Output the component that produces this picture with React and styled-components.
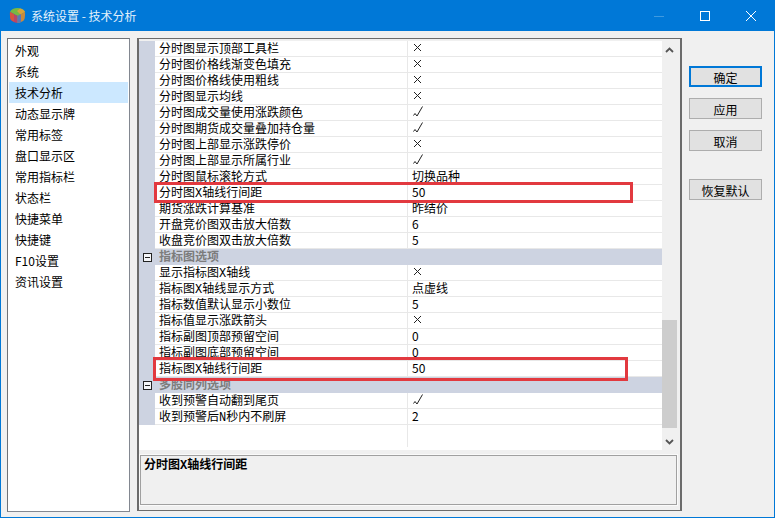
import React from "react";
import styled, { createGlobalStyle } from "styled-components";

const Global = createGlobalStyle`
  html, body { margin: 0; padding: 0; background: #f0f0f0; }
  body { font-family: "Noto Sans CJK SC", "Liberation Sans", sans-serif; font-size: 12px; color: #000; }
  * { box-sizing: border-box; }
`;

const Window = styled.div`
  width: 775px; height: 518px; display: flex; flex-direction: column;
  border: 1px solid #0078d7; border-top: 0; background: #f0f0f0; overflow: hidden;
`;
const TitleBar = styled.div`
  height: 31px; flex: none; background: #0078d7; color: #e4f1fb;
  display: flex; align-items: center; padding-left: 8px;
`;
const TitleText = styled.span`
  margin-left: 5px; line-height: 16px; white-space: pre;
`;
const WindowControls = styled.div`
  margin-left: auto; display: flex; align-items: center; height: 31px;
`;
const WindowControl = styled.div`
  width: 46px; height: 31px; display: flex; align-items: center; justify-content: center;
`;
const Body = styled.div`
  flex: 1; display: flex; padding: 7px 0 6px 6px; min-height: 0;
`;
const Sidebar = styled.ul`
  width: 123px; flex: none; margin: 0 7px 0 0; padding: 1px 1px; list-style: none;
  background: #fff; border: 1px solid #828790; border-top-color: #6f7277; border-left-color: #6f7277;
  height: 474px;
`;
const SideItem = styled.li`
  height: 21px; line-height: 21px; padding-left: 6px;
  background: ${p => (p.$selected ? "#cce8ff" : "transparent")};
`;
const Panel = styled.div`
  width: 545px; flex: none; height: 473px; position: relative;
  border: 1px solid #6b6b6b; border-left-width: 2px; padding: 2px 4px 5px 0; border-right-width: 2px;
  display: flex; flex-direction: column;
`;
const GridArea = styled.div`
  display: flex; height: 409px; flex: none;
`;
const Grid = styled.div`
  width: 523px; flex: none; background: #fff; position: relative; overflow: hidden;
  display: flex; flex-direction: column;
`;
const Row = styled.div`
  height: 16px; flex: none; display: grid; grid-template-columns: 16px 253px 1fr;
  background: ${p => (p.$header ? "#cdd3e1" : "#fff")};
`;
const Gutter = styled.div`
  background: #cdd3e1; display: flex; align-items: center; justify-content: center;
`;
const Label = styled.div`
  padding: 1px 0 0 4px; line-height: 16px; white-space: nowrap; overflow: hidden;
  font-family: "Liberation Mono", "Noto Sans CJK SC", monospace;
  border-right: 1px solid #e8e8e8; border-bottom: 1px solid #e8e8e8;
  ${p => p.$header && `font-weight: 700; color: #7c7c7c; border-color: #cdd3e1;`}
`;
const Value = styled.div`
  padding: 0 0 2px 4px; line-height: 13px; display: flex; align-items: center;
  border-bottom: 1px solid #e8e8e8;
  ${p => p.$header && `border-color: #cdd3e1;`}
  svg { margin-left: 1px; flex: none; }
`;
const EmptyRow = styled.div`
  flex: 1; display: grid; grid-template-columns: 16px 253px 1fr;
`;
const EmptyCell = styled.div`
  border-right: 1px solid #e8e8e8; margin-left: 16px; grid-column: 1 / 3; margin-bottom: 3px;
`;
const Expander = styled.span`
  width: 9px; height: 9px; border: 1px solid #222; background: #f4f5f8; display: flex;
  align-items: center; justify-content: center;
  &::after { content: ""; width: 5px; height: 1px; background: #222; }
`;
const Highlight = styled.div`
  position: absolute; border: 3px solid #e2393f; pointer-events: none;
  left: ${p => p.$left}px; top: ${p => p.$top}px; width: ${p => p.$width}px; height: ${p => p.$height}px;
`;
const ScrollBar = styled.div`
  width: 15px; flex: none; display: flex; flex-direction: column; background: #f0f0f0;
`;
const ScrollButton = styled.div`
  height: 17px; flex: none; display: flex; align-items: center; justify-content: center;
`;
const ScrollTrack = styled.div`
  flex: 1; display: flex; flex-direction: column; justify-content: flex-end; padding-bottom: 5px;
`;
const ScrollThumb = styled.div`
  height: 108px; background: #cdcdcd;
`;
const Description = styled.div`
  margin: 5px 0 0 1px; height: 50px; border: 1px solid #a0a0a0; background: #f0f0f0;
  box-shadow: 0 0 0 1px #fafafa; width: 537px; padding: 2px 3px; font-weight: 700; line-height: 16px; flex: none;
  font-family: "Liberation Mono", "Noto Sans CJK SC", monospace;
`;
const Actions = styled.div`
  margin-left: 7px; width: 73px; flex: none; display: flex; flex-direction: column; padding-top: 28px;
`;
const Button = styled.button`
  width: 73px; height: 21px; padding: 2px 0 0; font: inherit; line-height: 15px; color: #000;
  background: #e1e1e1; border: ${p => (p.$primary ? "2px solid #0078d7" : "1px solid #adadad")};
  margin-bottom: ${p => p.$gap || 11}px;
`;

const Cross = () => (
  <svg width="9" height="9" viewBox="0 0 9 9" fill="none" stroke="#222" strokeWidth="1">
    <path d="M1 1 L8 8 M8 1 L1 8" />
  </svg>
);
const Check = () => (
  <svg width="10" height="11" viewBox="0 0 10 11" fill="none" stroke="#222" strokeWidth="1">
    <path d="M0.5 9.5 L2 7.5 L4 10 L9.5 0.5" />
  </svg>
);

const rows = [
  ["分时图显示顶部工具栏", "x"], ["分时图价格线渐变色填充", "x"], ["分时图价格线使用粗线", "x"],
  ["分时图显示均线", "x"], ["分时图成交量使用涨跌颜色", "v"], ["分时图期货成交量叠加持仓量", "v"],
  ["分时图上部显示涨跌停价", "x"], ["分时图上部显示所属行业", "v"], ["分时图鼠标滚轮方式", "切换品种"],
  ["分时图X轴线行间距", "50"], ["期货涨跌计算基准", "昨结价"], ["开盘竞价图双击放大倍数", "6"],
  ["收盘竞价图双击放大倍数", "5"], { header: "指标图选项" },
  ["显示指标图X轴线", "x"], ["指标图X轴线显示方式", "点虚线"], ["指标数值默认显示小数位", "5"],
  ["指标值显示涨跌箭头", "x"], ["指标副图顶部预留空间", "0"], ["指标副图底部预留空间", "0"],
  ["指标图X轴线行间距", "50"], { header: "多股同列选项" },
  ["收到预警自动翻到尾页", "v"], ["收到预警后N秒内不刷屏", "2"],
];
const side = ["外观", "系统", "技术分析", "动态显示牌", "常用标签", "盘口显示区", "常用指标栏", "状态栏", "快捷菜单", "快捷键", "F10设置", "资讯设置"];

const renderValue = v => (v === "x" ? <Cross /> : v === "v" ? <Check /> : v);

export default function App() {
  return (
    <Window>
      <Global />
      <TitleBar>
        <svg width="17" height="17" viewBox="0 0 17 17">
          <path d="M8.5 1 C12 1 15 2.5 16 5 L8.5 9 L1 5 C2 2.5 5 1 8.5 1 Z" fill="#78b843" />
          <path d="M11 1.5 C13.5 2 15.3 3.3 16 5 L11.5 7.4 L8 4 Z" fill="#d9a23a" />
          <path d="M1 5 L8.5 9 V16 C5 15.5 2 14 1.5 12 C1 10 .8 7 1 5 Z" fill="#b8456a" />
          <path d="M1 5 L5 7.2 V14.5 C3 13.8 1.8 13 1.5 12 C1 10 .8 7 1 5 Z" fill="#d8523f" />
          <path d="M16 5 L8.5 9 V16 C12 15.5 15 14 15.5 12 C16 10 16.2 7 16 5 Z" fill="#c98a3c" />
          <path d="M8.5 9 L12 7.2 V15 C10.8 15.6 9.6 15.9 8.5 16 Z" fill="#5a78b8" />
        </svg>
        <TitleText>系统设置 - 技术分析</TitleText>
        <WindowControls>
          <WindowControl>
            <svg width="10" height="10" viewBox="0 0 10 10"><path d="M0 5.5 H10" stroke="#3f9ae0" strokeWidth="1" /></svg>
          </WindowControl>
          <WindowControl>
            <svg width="10" height="10" viewBox="0 0 10 10"><rect x=".5" y=".5" width="9" height="9" fill="none" stroke="#fff" /></svg>
          </WindowControl>
          <WindowControl>
            <svg width="10" height="10" viewBox="0 0 10 10"><path d="M0 0 L10 10 M10 0 L0 10" stroke="#fff" /></svg>
          </WindowControl>
        </WindowControls>
      </TitleBar>
      <Body>
        <Sidebar>
          {side.map(s => <SideItem key={s} $selected={s === "技术分析"}>{s}</SideItem>)}
        </Sidebar>
        <Panel>
          <GridArea>
            <Grid>
              {rows.map((r, i) =>
                r.header ? (
                  <Row key={i} $header>
                    <Gutter><Expander /></Gutter>
                    <Label $header>{r.header}</Label>
                    <Value $header />
                  </Row>
                ) : (
                  <Row key={i}>
                    <Gutter />
                    <Label>{r[0]}</Label>
                    <Value>{renderValue(r[1])}</Value>
                  </Row>
                )
              )}
              <EmptyRow><EmptyCell /></EmptyRow>
              <Highlight $left={15} $top={141} $width={479} $height={21} />
              <Highlight $left={14} $top={316} $width={475} $height={24} />
            </Grid>
            <ScrollBar>
              <ScrollButton>
                <svg width="9" height="6" viewBox="0 0 9 6"><path d="M1 5 L4.5 1.5 L8 5" fill="none" stroke="#555" strokeWidth="1.8" /></svg>
              </ScrollButton>
              <ScrollTrack><ScrollThumb /></ScrollTrack>
              <ScrollButton>
                <svg width="9" height="6" viewBox="0 0 9 6"><path d="M1 1 L4.5 4.5 L8 1" fill="none" stroke="#555" strokeWidth="1.8" /></svg>
              </ScrollButton>
            </ScrollBar>
          </GridArea>
          <Description>分时图X轴线行间距</Description>
        </Panel>
        <Actions>
          <Button $primary>确定</Button>
          <Button>应用</Button>
          <Button $gap={28}>取消</Button>
          <Button>恢复默认</Button>
        </Actions>
      </Body>
    </Window>
  );
}
